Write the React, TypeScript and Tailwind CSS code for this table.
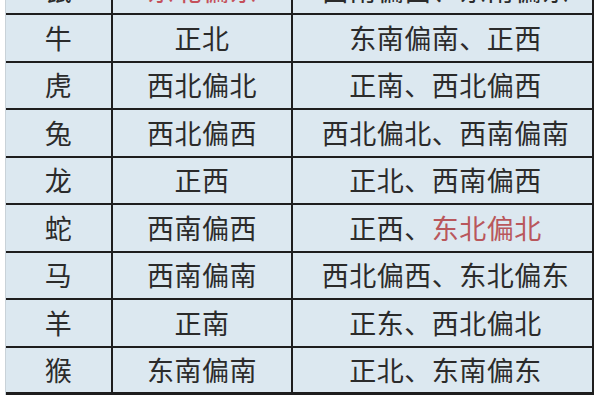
const rows: [string, string, string, boolean?, boolean?][] = [
  ["鼠", "东北偏东", "西南偏西、东南偏东", true],
  ["牛", "正北", "东南偏南、正西"],
  ["虎", "西北偏北", "正南、西北偏西"],
  ["兔", "西北偏西", "西北偏北、西南偏南"],
  ["龙", "正西", "正北、西南偏西"],
  ["蛇", "西南偏西", "正西、东北偏北", false, true],
  ["马", "西南偏南", "西北偏西、东北偏东"],
  ["羊", "正南", "正东、西北偏北"],
  ["猴", "东南偏南", "正北、东南偏东"],
];

export default function App() {
  return (
    <div
      className="w-[600px] h-[400px] overflow-hidden bg-white text-[#2b2b2b]"
      style={{ fontFamily: '"Noto Sans CJK SC", "Noto Sans", sans-serif' }}
    >
      <div className="ml-[5px] w-[589px] -mt-[32.5px] border-l border-l-[#c9d2d8] border-r-2 border-r-[#1e1e1e]">
        {rows.map(([animal, fortune, other, redMid, redTail], i) => {
          const parts = other.split("、");
          return (
            <div
              key={i}
              className={
                "grid grid-cols-[107px_180px_1fr] h-[47.5px] bg-[#dce8f0] border-b-2 border-b-[#1e1e1e] text-[27px] leading-none tracking-[0.5px]" +
                (i === rows.length - 1 ? " border-b-[3px]" : "")
              }
            >
              <div className="flex items-center justify-center border-r-2 border-r-[#1e1e1e] pb-[1px]">
                {animal}
              </div>
              <div
                className={
                  "flex items-center justify-center border-r-2 border-r-[#1e1e1e] pb-[1px]" +
                  (redMid ? " text-[#c4505a]" : "")
                }
              >
                {fortune}
              </div>
              <div className="flex items-center justify-center pl-[6px] pb-[1px]">
                <span>{parts[0]}、</span>
                <span className={redTail ? "text-[#b9575c]" : ""}>{parts[1]}</span>
              </div>
            </div>
          );
        })}
      </div>
    </div>
  );
}
